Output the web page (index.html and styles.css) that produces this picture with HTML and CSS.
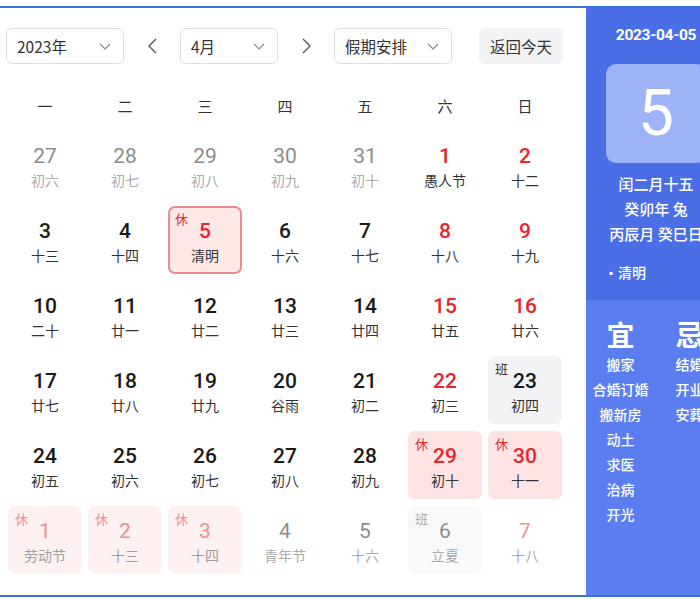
FILE: index.html
```html
<!DOCTYPE html>
<html lang="zh">
<head>
<meta charset="utf-8">
<title>万年历</title>
<link rel="stylesheet" href="styles.css">
</head>
<body>
<div class="app">
  <div class="main">
    <div class="toolbar">
      <div class="select sel-year"><span>2023年</span><svg class="chev" viewBox="0 0 12 7"><path d="M1 1l5 5 5-5"/></svg></div>
      <div class="arrow"><svg viewBox="0 0 9 16"><path d="M8 1L1 8l7 7"/></svg></div>
      <div class="select sel-month"><span>4月</span><svg class="chev" viewBox="0 0 12 7"><path d="M1 1l5 5 5-5"/></svg></div>
      <div class="arrow"><svg viewBox="0 0 9 16"><path d="M1 1l7 7-7 7"/></svg></div>
      <div class="select sel-holiday"><span>假期安排</span><svg class="chev" viewBox="0 0 12 7"><path d="M1 1l5 5 5-5"/></svg></div>
      <div class="btn-today">返回今天</div>
    </div>
    <div class="weekdays">
      <span>一</span><span>二</span><span>三</span><span>四</span><span>五</span><span>六</span><span>日</span>
    </div>
    <div class="grid">
      <div class="cell other"><b>27</b><i>初六</i></div>
      <div class="cell other"><b>28</b><i>初七</i></div>
      <div class="cell other"><b>29</b><i>初八</i></div>
      <div class="cell other"><b>30</b><i>初九</i></div>
      <div class="cell other"><b>31</b><i>初十</i></div>
      <div class="cell red"><b>1</b><i>愚人节</i></div>
      <div class="cell red"><b>2</b><i>十二</i></div>

      <div class="cell"><b>3</b><i>十三</i></div>
      <div class="cell"><b>4</b><i>十四</i></div>
      <div class="cell red selected"><em class="tag">休</em><b>5</b><i>清明</i></div>
      <div class="cell"><b>6</b><i>十六</i></div>
      <div class="cell"><b>7</b><i>十七</i></div>
      <div class="cell red"><b>8</b><i>十八</i></div>
      <div class="cell red"><b>9</b><i>十九</i></div>

      <div class="cell"><b>10</b><i>二十</i></div>
      <div class="cell"><b>11</b><i>廿一</i></div>
      <div class="cell"><b>12</b><i>廿二</i></div>
      <div class="cell"><b>13</b><i>廿三</i></div>
      <div class="cell"><b>14</b><i>廿四</i></div>
      <div class="cell red"><b>15</b><i>廿五</i></div>
      <div class="cell red"><b>16</b><i>廿六</i></div>

      <div class="cell"><b>17</b><i>廿七</i></div>
      <div class="cell"><b>18</b><i>廿八</i></div>
      <div class="cell"><b>19</b><i>廿九</i></div>
      <div class="cell"><b>20</b><i>谷雨</i></div>
      <div class="cell"><b>21</b><i>初二</i></div>
      <div class="cell red"><b>22</b><i>初三</i></div>
      <div class="cell work"><em class="tag">班</em><b>23</b><i>初四</i></div>

      <div class="cell"><b>24</b><i>初五</i></div>
      <div class="cell"><b>25</b><i>初六</i></div>
      <div class="cell"><b>26</b><i>初七</i></div>
      <div class="cell"><b>27</b><i>初八</i></div>
      <div class="cell"><b>28</b><i>初九</i></div>
      <div class="cell red rest"><em class="tag">休</em><b>29</b><i>初十</i></div>
      <div class="cell red rest"><em class="tag">休</em><b>30</b><i>十一</i></div>

      <div class="cell other-rest"><em class="tag">休</em><b>1</b><i>劳动节</i></div>
      <div class="cell other-rest"><em class="tag">休</em><b>2</b><i>十三</i></div>
      <div class="cell other-rest"><em class="tag">休</em><b>3</b><i>十四</i></div>
      <div class="cell other"><b>4</b><i>青年节</i></div>
      <div class="cell other"><b>5</b><i>十六</i></div>
      <div class="cell other-work"><em class="tag">班</em><b>6</b><i>立夏</i></div>
      <div class="cell other-red"><b>7</b><i>十八</i></div>
    </div>
  </div>
  <aside class="panel">
    <div class="panel-top">
      <div class="p-date">2023-04-05</div>
      <div class="p-day">5</div>
      <div class="p-lunar">
        <div>闰二月十五</div>
        <div>癸卯年 兔</div>
        <div>丙辰月 癸巳日</div>
      </div>
      <div class="p-fest">•清明</div>
    </div>
    <div class="panel-bottom">
      <div class="yj">
        <div class="yj-title">宜</div>
        <div>搬家</div><div>合婚订婚</div><div>搬新房</div><div>动土</div><div>求医</div><div>治病</div><div>开光</div>
      </div>
      <div class="yj">
        <div class="yj-title">忌</div>
        <div>结婚</div><div>开业</div><div>安葬</div>
      </div>
    </div>
  </aside>
</div>
</body>
</html>
```

FILE: styles.css
```css
html, body {
  margin: 0;
  padding: 0;
  background: #ffffff;
  overflow: hidden;
}
body {
  font-family: "Noto Sans CJK SC", "Noto Sans", sans-serif;
  color: #333;
}
.app {
  display: flex;
  width: 726px;
  height: 587px;
  margin-top: 6px;
  border-top: 2px solid #3f6fdc;
  border-bottom: 2px solid #3f6fdc;
}
.main {
  width: 586px;
  flex: none;
  box-sizing: border-box;
  padding: 0 0 0 6px;
  background: #fff;
}
.toolbar {
  display: flex;
  align-items: center;
  height: 36px;
  margin-top: 20px;
}
.select {
  box-sizing: border-box;
  height: 36px;
  border: 1px solid #dcdfe6;
  border-radius: 6px;
  display: flex;
  align-items: center;
  justify-content: space-between;
  padding: 0 12px 0 10px;
  font-size: 15.5px;
  color: #333;
}
.sel-year { width: 118px; }
.sel-month { width: 98px; }
.sel-holiday { width: 118px; }
.chev {
  width: 12px;
  height: 7px;
  fill: none;
  stroke: #888;
  stroke-width: 1.2;
}
.arrow {
  width: 56px;
  display: flex;
  justify-content: center;
  align-items: center;
}
.arrow svg {
  width: 9px;
  height: 16px;
  fill: none;
  stroke: #555;
  stroke-width: 1.4;
}
.btn-today {
  margin-left: 27px;
  width: 84px;
  height: 36px;
  border-radius: 6px;
  background: #f2f3f5;
  display: flex;
  align-items: center;
  justify-content: center;
  font-size: 15.5px;
  color: #333;
}
.weekdays {
  display: grid;
  grid-template-columns: repeat(7, 74px);
  column-gap: 6px;
  padding-left: 2px;
  height: 67px;
  align-items: center;
  font-size: 15px;
  color: #333;
  padding-top: 16px;
  box-sizing: border-box;
}
.weekdays span { text-align: center; }
.grid {
  display: grid;
  grid-template-columns: repeat(7, 74px);
  grid-auto-rows: 68px;
  column-gap: 6px;
  row-gap: 7px;
  padding-left: 2px;
}
.cell {
  position: relative;
  box-sizing: border-box;
  border-radius: 7px;
  display: flex;
  flex-direction: column;
  align-items: center;
  padding-top: 12px;
}
.cell b {
  font-family: "Roboto", "Liberation Sans", sans-serif;
  font-weight: 500;
  font-size: 21px;
  line-height: 26px;
  color: #1a1a1a;
}
.cell i {
  font-style: normal;
  font-size: 14px;
  line-height: 22px;
  color: #333;
}
.tag {
  position: absolute;
  left: 7px;
  top: 5px;
  font-style: normal;
  font-size: 13px;
  line-height: 16px;
}
.red b { color: #e3262f; }
.other b { color: #8c8c8c; font-weight: 400; }
.other i { color: #ababab; }
.selected {
  background: #fde7e7;
  border: 2px solid #ec8b8f;
  padding-top: 10px;
}
.selected .tag { left: 5px; top: 3px; color: #e3262f; }
.rest { background: #fde3e3; }
.rest .tag { color: #e3262f; }
.work { background: #f2f3f5; }
.work .tag { color: #333; }
.other-rest { background: #fdf1f1; }
.other-rest b { color: #ef8c8f; font-weight: 400; }
.other-rest i { color: #a0a0a0; }
.other-rest .tag { color: #ef8c8f; }
.other-work { background: #f8f9fb; }
.other-work b { color: #8c8c8c; font-weight: 400; }
.other-work i { color: #ababab; }
.other-work .tag { color: #aaa; }
.other-red b { color: #f09296; font-weight: 400; }
.other-red i { color: #ababab; }

.panel {
  width: 140px;
  flex: none;
  display: flex;
  flex-direction: column;
  color: #fff;
}
.panel-top {
  background: #4a6ee6;
  height: 292px;
  display: flex;
  flex-direction: column;
  align-items: center;
}
.p-date {
  font-family: "Roboto", "Liberation Sans", sans-serif;
  font-weight: 700;
  font-size: 15.5px;
  letter-spacing: -0.3px;
  margin-top: 17px;
  line-height: 20px;
}
.p-day {
  margin-top: 19px;
  width: 100px;
  height: 99px;
  border-radius: 10px;
  background: #9db3f6;
  display: flex;
  align-items: center;
  justify-content: center;
  font-family: "Roboto", "Liberation Sans", sans-serif;
  font-size: 64px;
  font-weight: 400;
}
.p-lunar {
  margin-top: 8px;
  text-align: center;
  font-size: 15px;
  line-height: 25px;
  font-weight: 500;
  white-space: nowrap;
}
.p-fest {
  align-self: flex-start;
  margin-left: 18px;
  margin-top: 16px;
  font-size: 14px;
  font-weight: 500;
}
.panel-bottom {
  flex: 1;
  background: #5a7ef0;
  display: flex;
  padding-top: 17px;
}
.yj {
  width: 69px;
  text-align: center;
  font-size: 14px;
  line-height: 25px;
  font-weight: 500;
  white-space: nowrap;
}
.yj-title {
  font-size: 28px;
  font-weight: 700;
  line-height: 34px;
  margin-bottom: 1px;
}
```
